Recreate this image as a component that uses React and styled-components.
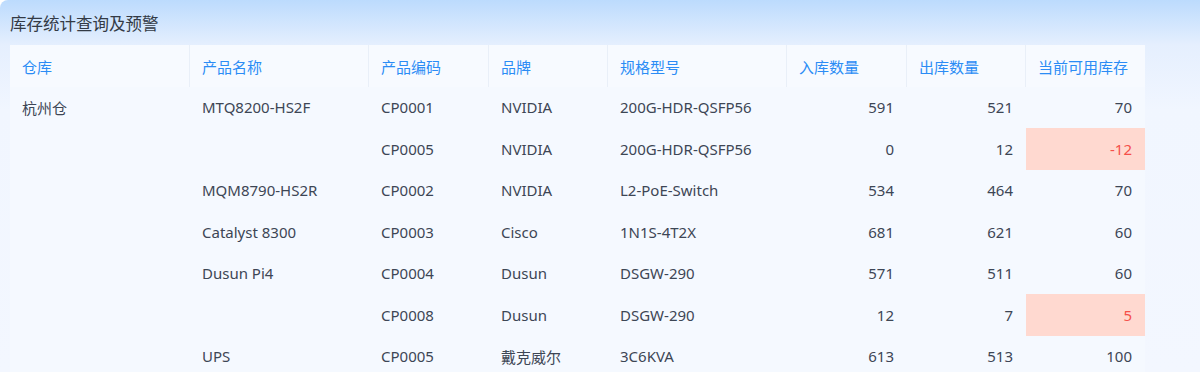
import React from "react";
import styled, { createGlobalStyle } from "styled-components";

const GlobalStyle = createGlobalStyle`
  body {
    margin: 0;
    background: #ffffff;
    font-family: "Noto Sans", "Noto Sans CJK SC", sans-serif;
  }
`;

const Card = styled.div`
  width: 1200px;
  height: 372px;
  overflow: hidden;
  border-radius: 8px 0 0 0;
  background: linear-gradient(180deg, #bcdbfd 0px, #e5effe 45px, #f1f6ff 110px, #f3f7ff 100%);
  box-sizing: border-box;
`;

const Title = styled.div`
  height: 45px;
  padding-left: 10px;
  display: flex;
  align-items: center;
  font-size: 16.5px;
  color: #333a45;
  font-family: "Noto Sans CJK SC", sans-serif;
`;

const Table = styled.div`
  margin-left: 10px;
  width: 1135px;
  display: grid;
  grid-template-columns: 180px 179px 120px 119px 179px 120px 119px 119px;
  grid-auto-rows: 41.5px;
  background: #f5f9ff;
`;

const HeadCell = styled.div`
  height: 42px;
  display: flex;
  align-items: center;
  padding-left: 12px;
  font-size: 15px;
  color: #2b8cf5;
  font-family: "Noto Sans CJK SC", sans-serif;
  background: #f7faff;
  border-right: ${(p) => (p.$last ? "none" : "1px solid #e9eff8")};
  box-sizing: border-box;
`;

const Cell = styled.div`
  display: flex;
  align-items: center;
  justify-content: ${(p) => (p.$num ? "flex-end" : "flex-start")};
  padding: ${(p) => (p.$num ? "0 13px 0 0" : "0 0 0 12px")};
  font-size: 15px;
  color: ${(p) => (p.$warn ? "#f5504a" : "#3d4655")};
  background: ${(p) => (p.$warn ? "#ffd9d0" : "transparent")};
  box-sizing: border-box;
`;

const headers = ["仓库", "产品名称", "产品编码", "品牌", "规格型号", "入库数量", "出库数量", "当前可用库存"];

const rows = [
  ["杭州仓", "MTQ8200-HS2F", "CP0001", "NVIDIA", "200G-HDR-QSFP56", 591, 521, 70],
  ["", "", "CP0005", "NVIDIA", "200G-HDR-QSFP56", 0, 12, -12],
  ["", "MQM8790-HS2R", "CP0002", "NVIDIA", "L2-PoE-Switch", 534, 464, 70],
  ["", "Catalyst 8300", "CP0003", "Cisco", "1N1S-4T2X", 681, 621, 60],
  ["", "Dusun Pi4", "CP0004", "Dusun", "DSGW-290", 571, 511, 60],
  ["", "", "CP0008", "Dusun", "DSGW-290", 12, 7, 5],
  ["", "UPS", "CP0005", "戴克威尔", "3C6KVA", 613, 513, 100],
];

const App = () => {
  return (
    <>
      <GlobalStyle />
      <Card>
        <Title>库存统计查询及预警</Title>
        <Table>
          {headers.map((h, i) => (
            <HeadCell key={h} $last={i === headers.length - 1}>
              {h}
            </HeadCell>
          ))}
          {rows.map((row, r) =>
            row.map((v, c) => (
              <Cell
                key={`${r}-${c}`}
                $num={c >= 5}
                $warn={c === 7 && v < 10}
              >
                {v}
              </Cell>
            ))
          )}
        </Table>
      </Card>
    </>
  );
};

export default App;
